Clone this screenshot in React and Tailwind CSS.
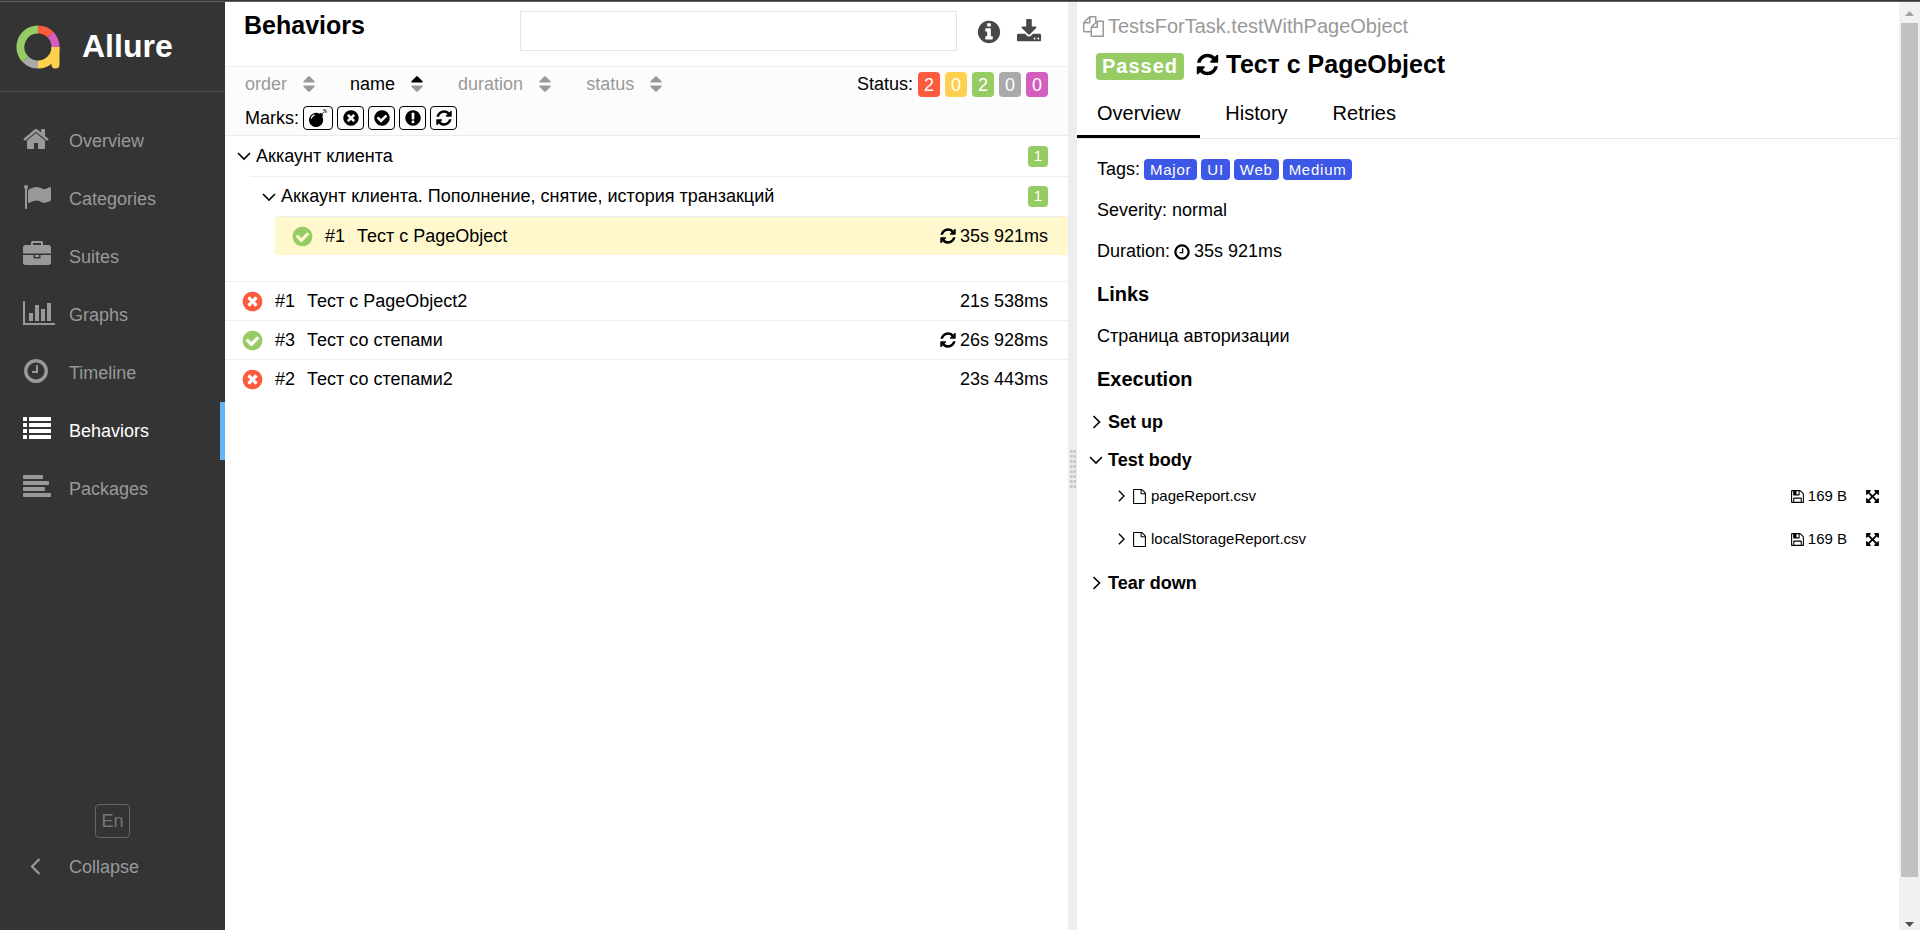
import React, { useState } from "react";

const RING =
  "q0 209-103 385.5t-279.5 279.5-385.5 103-385.5-103-279.5-279.5-103-385.5 103-385.5 279.5-279.5 385.5-103 385.5 103 279.5 279.5 103 385.5z";

const ICONS = {
  home: "M1472 992v480q0 26-19 45t-45 19h-384v-384h-256v384h-384q-26 0-45-19t-19-45v-480q0-1 .5-3t.5-3l575-474 575 474q1 2 1 6zm223-69l-62 74q-8 9-21 11h-3q-13 0-21-7l-692-577-692 577q-12 8-24 7-13-2-21-11l-62-74q-8-10-7-23.5t11-21.5l719-599q32-26 76-26t76 26l244 204v-195q0-14 9-23t23-9h192q14 0 23 9t9 23v408l219 182q10 8 11 21.5t-7 23.5z",
  flag: "M320 256q0 72-64 110v1266q0 13-9.5 22.5t-22.5 9.5h-64q-13 0-22.5-9.5t-9.5-22.5v-1266q-64-38-64-110 0-53 37.5-90.5t90.5-37.5 90.5 37.5 37.5 90.5zm1472 64v763q0 25-12.5 38.5t-39.5 27.5q-215 116-369 116-61 0-123.5-22t-108.5-48-115.5-48-142.5-22q-192 0-464 146-17 9-33 9-26 0-45-19t-19-45v-742q0-32 31-55 21-14 79-43 236-120 421-120 107 0 200 29t219 88q38 19 88 19 54 0 117.5-21t110-47 88-47 54.5-21q26 0 45 19t19 45z",
  briefcase:
    "M640 256h512v-128h-512v128zm1152 640v480q0 66-47 113t-113 47h-1472q-66 0-113-47t-47-113v-480h672v160q0 26 19 45t45 19h320q26 0 45-19t19-45v-160h672zm-768 0v128h-256v-128h256zm768-480v384h-1792v-384q0-66 47-113t113-47h352v-160q0-40 28-68t68-28h576q40 0 68 28t28 68v160h352q66 0 113 47t47 113z",
  chart:
    "M640 896v512h-256v-512h256zm384-512v1024h-256v-1024h256zm1024 1152v128h-2048v-1536h128v1408h1920zm-640-896v768h-256v-768h256zm384-384v1152h-256v-1152h256z",
  clock:
    "M1024 544v448q0 14-9 23t-23 9h-320q-14 0-23-9t-9-23v-64q0-14 9-23t23-9h224v-352q0-14 9-23t23-9h64q14 0 23 9t9 23zm416 352q0-148-73-273t-198-198-273-73-273 73-198 198-73 273 73 273 198 198 273 73 273-73 198-198 73-273zm224 0" +
    RING,
  list: "M0 160q0-32 32-32h192q32 0 32 32v192q0 32-32 32h-192q-32 0-32-32zM384 160q0-32 32-32h1344q32 0 32 32v192q0 32-32 32h-1344q-32 0-32-32zM0 544q0-32 32-32h192q32 0 32 32v192q0 32-32 32h-192q-32 0-32-32zM384 544q0-32 32-32h1344q32 0 32 32v192q0 32-32 32h-1344q-32 0-32-32zM0 928q0-32 32-32h192q32 0 32 32v192q0 32-32 32h-192q-32 0-32-32zM384 928q0-32 32-32h1344q32 0 32 32v192q0 32-32 32h-1344q-32 0-32-32zM0 1312q0-32 32-32h192q32 0 32 32v192q0 32-32 32h-192q-32 0-32-32zM384 1312q0-32 32-32h1344q32 0 32 32v192q0 32-32 32h-1344q-32 0-32-32z",
  align:
    "M1792 1344v128q0 26-19 45t-45 19h-1664q-26 0-45-19t-19-45v-128q0-26 19-45t45-19h1664q26 0 45 19t19 45zm-384-384v128q0 26-19 45t-45 19h-1280q-26 0-45-19t-19-45v-128q0-26 19-45t45-19h1280q26 0 45 19t19 45zm256-384v128q0 26-19 45t-45 19h-1536q-26 0-45-19t-19-45v-128q0-26 19-45t45-19h1536q26 0 45 19t19 45zm-384-384v128q0 26-19 45t-45 19h-1152q-26 0-45-19t-19-45v-128q0-26 19-45t45-19h1152q26 0 45 19t19 45z",
  info:
    "M1152 1376v-160q0-14-9-23t-23-9h-96v-512q0-14-9-23t-23-9h-320q-14 0-23 9t-9 23v160q0 14 9 23t23 9h96v320h-96q-14 0-23 9t-9 23v160q0 14 9 23t23 9h448q14 0 23-9t9-23zm-128-896v-160q0-14-9-23t-23-9h-192q-14 0-23 9t-9 23v160q0 14 9 23t23 9h192q14 0 23-9t9-23zm640 416" +
    RING,
  download:
    "M1344 1344q0-26-19-45t-45-19-45 19-19 45 19 45 45 19 45-19 19-45zm256 0q0-26-19-45t-45-19-45 19-19 45 19 45 45 19 45-19 19-45zm128-224v320q0 40-28 68t-68 28h-1472q-40 0-68-28t-28-68v-320q0-40 28-68t68-28h465l135 136q58 56 136 56t136-56l136-136h464q40 0 68 28t28 68zm-325-569q17 41-14 70l-448 448q-18 19-45 19t-45-19l-448-448q-31-29-14-70 17-39 59-39h256v-448q0-26 19-45t45-19h256q26 0 45 19t19 45v448h256q42 0 59 39z",
  bomb: "M571 589q-10-25-34-35t-49 0q-108 44-191 127t-127 191q-10 25 0 49t35 34q13 5 24 5 42 0 60-40 34-84 98.5-148.5t148.5-98.5q25-11 35-35t0-49zm942-356l46 46-244 243 68 68q19 19 19 45.5t-19 45.5l-64 64q89 161 89 343 0 143-55.5 273.5t-150 225-225 150-273.5 55.5-273.5-55.5-225-150-150-225-55.5-273.5 55.5-273.5 150-225 225-150 273.5-55.5q182 0 343 89l64-64q19-19 45.5-19t45.5 19l68 68zm8-56q-10 10-22 10-13 0-23-10l-91-90q-9-10-9-23t9-23q10-9 23-9t23 9l90 91q10 9 10 22.5t-10 22.5zm230 230q-11 9-23 9t-23-9l-90-91q-10-9-10-22.5t10-22.5q9-10 22.5-10t22.5 10l91 90q9 10 9 23t-9 23zm41-183q0 14-9 23t-23 9h-96q-14 0-23-9t-9-23 9-23 23-9h96q14 0 23 9t9 23zm-192-192v96q0 14-9 23t-23 9-23-9-9-23v-96q0-14 9-23t23-9 23 9 9 23zm151 55l-91 90q-10 10-22 10-13 0-23-10-10-9-10-22.5t10-22.5l90-91q10-9 23-9t23 9q9 10 9 23t-9 23z",
  failed:
    "M1277 1122q0-26-19-45l-181-181 181-181q19-19 19-45 0-27-19-46l-90-90q-19-19-46-19-26 0-45 19l-181 181-181-181q-19-19-45-19-27 0-46 19l-90 90q-19 19-19 46 0 26 19 45l181 181-181 181q-19 19-19 45 0 27 19 46l90 90q19 19 46 19 26 0 45-19l181-181 181 181q19 19 45 19 27 0 46-19l90-90q19-19 19-46zm387-226" +
    RING,
  passed:
    "M1412 734q0-28-18-46l-91-90q-19-19-45-19t-45 19l-408 407-226-226q-19-19-45-19t-45 19l-91 90q-18 18-18 46 0 27 18 45l362 362q19 19 45 19 27 0 46-19l543-543q18-18 18-45zm252 162" +
    RING,
  exclamation:
    "M896 128q209 0 385.5 103t279.5 279.5 103 385.5-103 385.5-279.5 279.5-385.5 103-385.5-103-279.5-279.5-103-385.5 103-385.5 279.5-279.5 385.5-103zm128 1247v-190q0-14-9-23.5t-22-9.5h-192q-13 0-23 10t-10 23v190q0 13 10 23t23 10h192q13 0 22-9.5t9-23.5zm-2-344l18-621q0-12-10-18-10-8-24-8h-220q-14 0-24 8-10 6-10 18l17 621q0 10 10 17.5t24 7.5h185q14 0 23.5-7.5t10.5-17.5z",
  refresh:
    "M1639 1056q0 5-1 7-64 268-268 434.5t-478 166.5q-146 0-282.5-55t-243.5-157l-129 129q-19 19-45 19t-45-19-19-45v-448q0-26 19-45t45-19h448q26 0 45 19t19 45-19 45l-137 137q71 66 161 102t187 36q134 0 250-65t186-179q11-17 53-117 8-23 30-23h192q13 0 22.5 9.5t9.5 22.5zm25-800v448q0 26-19 45t-45 19h-448q-26 0-45-19t-19-45 19-45l138-138q-148-137-349-137-134 0-250 65t-186 179q-11 17-53 117-8 23-30 23h-199q-13 0-22.5-9.5t-9.5-22.5v-7q65-268 270-434.5t480-166.5q146 0 284 55.5t245 156.5l130-129q19-19 45-19t45 19 19 45z",
  files:
    "M1696 384q40 0 68 28t28 68v1216q0 40-28 68t-68 28h-960q-40 0-68-28t-28-68v-288h-544q-40 0-68-28t-28-68v-672q0-40 20-88t48-76l408-408q28-28 76-48t88-20h416q40 0 68 28t28 68v328q68-40 128-40h416zm-544 213l-299 299h299v-299zm-640-384l-299 299h299v-299zm196 647l316-316v-416h-384v416q0 40-28 68t-68 28h-416v640h512v-256q0-40 20-88t48-76zm956 804v-1152h-384v416q0 40-28 68t-68 28h-416v640h896z",
  file: "M1596 380q28 28 48 76t20 88v1152q0 40-28 68t-68 28h-1344q-40 0-68-28t-28-68v-1600q0-40 28-68t68-28h896q40 0 88 20t76 48zm-444-244v376h376q-10-29-22-41l-313-313q-12-12-41-22zm384 1528v-1024h-416q-40 0-68-28t-28-68v-416h-768v1536h1280z",
  floppy:
    "M512 1536h768v-384h-768v384zm896 0h128v-896q0-14-10-38.5t-20-34.5l-281-281q-10-10-34-20t-39-10v416q0 40-28 68t-68 28h-576q-40 0-68-28t-28-68v-416h-128v1280h128v-416q0-40 28-68t68-28h832q40 0 68 28t28 68v416zm-384-928v-320q0-13-9.5-22.5t-22.5-9.5h-192q-13 0-22.5 9.5t-9.5 22.5v320q0 13 9.5 22.5t22.5 9.5h192q13 0 22.5-9.5t9.5-22.5zm640 32v928q0 40-28 68t-68 28h-1344q-40 0-68-28t-28-68v-1344q0-40 28-68t68-28h928q40 0 88 20t76 48l280 280q28 28 48 76t20 88z",
  expand:
    "M1411 541l-355 355 355 355 144-144q29-31 70-14 39 17 39 59v448q0 26-19 45t-45 19h-448q-42 0-59-40-17-39 14-69l144-144-355-355-355 355 144 144q31 30 14 69-17 40-59 40h-448q-26 0-45-19t-19-45v-448q0-42 40-59 39-17 69 14l144 144 355-355-355-355-144 144q-19 19-45 19-12 0-24-5-40-17-40-59v-448q0-26 19-45t45-19h448q42 0 59 40 17 39-14 69l-144 144 355 355 355-355-144-144q-31-30-14-69 17-40 59-40h448q26 0 45 19t19 45v448q0 42-39 59-13 5-25 5-26 0-45-19z",
};

function Icon({ name, className, viewBox = "0 0 1792 1792" }) {
  return (
    <svg viewBox={viewBox} className={`shrink-0 ${className}`} fill="currentColor" aria-hidden="true">
      <path d={ICONS[name]} />
    </svg>
  );
}

function ChevronDown() {
  return (
    <svg viewBox="0 0 14 14" className="size-3.5 shrink-0" fill="none" stroke="currentColor" strokeWidth="1.6" aria-hidden="true">
      <path d="M1 4l6 6 6-6" />
    </svg>
  );
}

function ChevronRight({ className }) {
  return (
    <svg viewBox="0 0 14 14" className={`shrink-0 ${className}`} fill="none" stroke="currentColor" strokeWidth="1.6" aria-hidden="true">
      <path d="M4.500 1l6 6-6 6" />
    </svg>
  );
}

function Logo() {
  return (
    <svg viewBox="0 0 44 44" className="size-11 shrink-0" fill="none" strokeWidth="8" aria-hidden="true">
      <path d="M9.600 34.400A17.500 17.500 0 0 1 22 4.500" stroke="#97cc64" />
      <path d="M22 39.500A17.500 17.500 0 0 1 9.600 34.400" stroke="#aaaaaa" />
      <path d="M22 4.500A17.500 17.500 0 0 1 34.400 9.600" stroke="#fd5a3e" />
      <path d="M34.400 9.600A17.500 17.500 0 0 1 39.500 22" stroke="#d35ebe" />
      <path d="M39.500 22A17.500 17.500 0 0 1 22 39.500" stroke="#ffd050" />
      <path d="M35.500 22h8v17.500a4 4 0 0 1-8 0z" fill="#ffd050" />
    </svg>
  );
}

const NAV = [
  { label: "Overview", icon: "home", viewBox: "64 0 1792 1792" },
  { label: "Categories", icon: "flag" },
  { label: "Suites", icon: "briefcase" },
  { label: "Graphs", icon: "chart", viewBox: "0 0 2048 1792" },
  { label: "Timeline", icon: "clock", viewBox: "64 0 1792 1792" },
  { label: "Behaviors", icon: "list" },
  { label: "Packages", icon: "align" },
];

function Sidebar() {
  return (
    <aside className="flex w-[225px] shrink-0 flex-col bg-[#343434] text-[#999]">
      <a href="#home" className="flex h-[90px] items-center gap-[22px] border-b border-[#505050] pl-4 text-[32px] font-bold text-white">
        <Logo />
        <span className="pb-0.5 leading-none">Allure</span>
      </a>
      <nav className="mt-5">
        {NAV.map((item) => {
          const active = item.label === "Behaviors";
          return (
            <a
              key={item.label}
              href={`#${item.label.toLowerCase()}`}
              className={`flex h-[58px] items-center border-r-[5px] pl-[23px] ${
                active ? "border-[#64b5f6] text-white" : "border-transparent"
              }`}
            >
              <span className="w-[46px] shrink-0 pb-1">
                <Icon name={item.icon} viewBox={item.viewBox} className={item.icon === "chart" ? "h-7 w-8" : "size-7"} />
              </span>
              {item.label}
            </a>
          );
        })}
      </nav>
      <div className="mt-auto flex flex-col pb-[34px]">
        <button type="button" className="h-[34px] w-[35px] self-center rounded border border-[#666] text-[#777]">
          En
        </button>
        <button type="button" className="flex h-[58px] items-center pl-[23px] text-left">
          <span className="w-[46px] shrink-0">
            <svg viewBox="0 0 24 24" className="size-6" fill="none" stroke="currentColor" strokeWidth="2.200" aria-hidden="true">
              <path d="M16.500 4l-7.500 7.500 7.500 7.500" />
            </svg>
          </span>
          Collapse
        </button>
      </div>
    </aside>
  );
}

function SortButton({ label, active, onClick }) {
  return (
    <button type="button" onClick={onClick} className={`flex items-center gap-3 ${active ? "text-black" : "text-[#999]"}`}>
      {label}
      <svg viewBox="0 0 1792 1792" className="size-5 shrink-0" aria-hidden="true">
        <path
          fill={active ? "#000" : "#999"}
          d="M1408 704q0 26-19 45t-45 19h-896q-26 0-45-19t-19-45 19-45l448-448q19-19 45-19t45 19l448 448q19 19 19 45z"
        />
        <path
          fill="#999"
          d="M1408 1088q0 26-19 45l-448 448q-19 19-45 19t-45-19l-448-448q-19-19-19-45t19-45 45-19h896q26 0 45 19t19 45z"
        />
      </svg>
    </button>
  );
}

const STATUSES = [
  { name: "failed", count: 2, color: "bg-[#fd5a3e]" },
  { name: "broken", count: 0, color: "bg-[#ffd050]" },
  { name: "passed", count: 2, color: "bg-[#97cc64]" },
  { name: "skipped", count: 0, color: "bg-[#aaa]" },
  { name: "unknown", count: 0, color: "bg-[#d35ebe]" },
];

function CountChip({ children }) {
  return (
    <span className="ml-auto flex h-[21px] w-5 items-center justify-center rounded bg-[#97cc64] text-[15px] text-white">
      {children}
    </span>
  );
}

function StatusIcon({ status }) {
  return (
    <Icon
      name={status}
      className={`size-[23px] ${status === "passed" ? "text-[#97cc64]" : "text-[#fd5a3e]"}`}
    />
  );
}

function Leaf({ status, order, name, time, retried, className = "" }) {
  return (
    <a href={`#test-${order}`} className={`flex h-[39px] items-center border-t border-[#eceff1] pr-5 ${className}`}>
      <StatusIcon status={status} />
      <span className="ml-[11px] w-8">#{order}</span>
      <span>{name}</span>
      <span className="ml-auto flex items-center gap-[3px]">
        {retried && <Icon name="refresh" className="size-[18px]" />}
        {time}
      </span>
    </a>
  );
}

function BehaviorsPane() {
  const [sort, setSort] = useState("name");
  return (
    <section className="flex min-w-0 flex-1 flex-col">
      <header className="flex h-16 items-start pr-[26px] pl-[19px]">
        <h1 className="mt-1 flex-1 text-[25px] leading-[38px] font-bold">Behaviors</h1>
        <input type="text" aria-label="Search" className="mt-[9px] h-10 w-[437px] border border-[#e5e5e5] bg-white px-3 outline-none" />
        <div className="mt-[17px] ml-[19px] flex gap-3.5 text-[#484848]">
          <button type="button" aria-label="Information">
            <Icon name="info" className="size-[26px]" />
          </button>
          <button type="button" aria-label="Download">
            <Icon name="download" className="size-[26px]" />
          </button>
        </div>
      </header>
      <div className="h-[69px] border-t border-[#ececec] bg-[#fcfcfc] pr-5 pl-5">
        <div className="flex h-[34px] items-center">
          <div className="flex gap-[31px]">
            {["order", "name", "duration", "status"].map((label) => (
              <SortButton key={label} label={label} active={sort === label} onClick={() => setSort(label)} />
            ))}
          </div>
          <div className="ml-auto flex items-center gap-[5px]">
            Status:
            {STATUSES.map((s) => (
              <button
                key={s.name}
                type="button"
                aria-label={`${s.name}: ${s.count}`}
                className={`h-[25px] w-[22px] rounded text-white ${s.color}`}
              >
                {s.count}
              </button>
            ))}
          </div>
        </div>
        <div className="flex h-[34px] items-center gap-1">
          Marks:
          {["bomb", "failed", "passed", "exclamation", "refresh"].map((mark) => (
            <button
              key={mark}
              type="button"
              aria-label={mark}
              className={`flex h-6 items-center justify-center rounded border border-black ${mark === "bomb" ? "w-[30px]" : "w-[27px]"}`}
            >
              <Icon name={mark} className="size-[18px]" />
            </button>
          ))}
        </div>
      </div>
      <div className="border-t border-[#ececec]">
        <button type="button" className="flex h-10 w-full items-center gap-[5px] pr-5 pl-3">
          <ChevronDown />
          Аккаунт клиента
          <CountChip>1</CountChip>
        </button>
        <div className="pl-[25px]">
          <button type="button" className="flex h-10 w-full items-center gap-[5px] border-t border-[#eceff1] pr-5 pl-3">
            <ChevronDown />
            Аккаунт клиента. Пополнение, снятие, история транзакций
            <CountChip>1</CountChip>
          </button>
          <div className="pl-[25px]">
            <Leaf status="passed" order={1} name="Тест с PageObject" time="35s 921ms" retried className="bg-[#fff8cd] pl-4" />
          </div>
        </div>
        <div className="mt-[26px]">
          <Leaf status="failed" order={1} name="Тест с PageObject2" time="21s 538ms" className="pl-4" />
          <Leaf status="passed" order={3} name="Тест со степами" time="26s 928ms" retried className="pl-4" />
          <Leaf status="failed" order={2} name="Тест со степами2" time="23s 443ms" className="pl-4" />
        </div>
      </div>
    </section>
  );
}

function Splitter() {
  return (
    <div className="flex w-[9px] shrink-0 items-center justify-center bg-[#eaeef1] pt-1.5">
      <svg viewBox="0 0 6 38" className="h-[38px] w-1.5" fill="#c8c8c8" aria-hidden="true">
        {[0, 5, 10, 15, 20, 25, 30, 35].map((y) => (
          <path key={y} d={`M0 ${y}h2.600v3h-2.600zM3.400 ${y}h2.600v3h-2.600z`} />
        ))}
      </svg>
    </div>
  );
}

function Attachment({ name }) {
  return (
    <div className="flex h-[34px] items-center pr-[19px] pl-[38px] text-[15px]">
      <button type="button" className="flex items-center">
        <ChevronRight className="mr-[5px] size-3" />
        <Icon name="file" className="mr-1 size-[15px]" />
        {name}
      </button>
      <a href={`#${name}`} className="ml-auto flex items-center gap-[3px]">
        <Icon name="floppy" className="size-[15px]" />
        169 B
      </a>
      <button type="button" aria-label={`Expand ${name}`} className="ml-[18px]">
        <Icon name="expand" className="size-[15px]" />
      </button>
    </div>
  );
}

function StepHeader({ title, open }) {
  return (
    <button type="button" className="flex h-[38px] items-center gap-[5px] pl-3 font-bold">
      {open ? <ChevronDown /> : <ChevronRight className="size-3.5" />}
      {title}
    </button>
  );
}

function TestPane() {
  const [tab, setTab] = useState("Overview");
  return (
    <section className="flex min-w-0 flex-1">
      <div className="min-w-0 flex-1 pt-[9px]">
        <div className="flex h-[30px] items-center gap-1 pl-1.5 text-[20px] text-[#999]">
          <Icon name="files" className="size-[21px]" />
          TestsForTask.testWithPageObject
        </div>
        <div className="flex h-[49px] items-center pt-0.5 pl-[19px]">
          <span className="rounded bg-[#97cc64] px-1.5 text-[20px] leading-[27px] font-bold tracking-wider text-white">Passed</span>
          <h2 className="ml-[11px] flex items-center gap-1.5 pb-1 text-[25px] leading-none font-bold">
            <Icon name="refresh" className="size-[25px]" />
            Тест с PageObject
          </h2>
        </div>
        <div className="flex gap-[5px] border-b border-[#e5e5e5] text-[20px]">
          {["Overview", "History", "Retries"].map((t) => (
            <button
              key={t}
              type="button"
              onClick={() => setTab(t)}
              className={`h-12 border-b-[3px] px-5 ${tab === t ? "border-black" : "border-transparent"}`}
            >
              {t}
            </button>
          ))}
        </div>
        <div className="pt-2.5 pl-5">
          <div className="flex h-[41px] items-center gap-1">
            Tags:
            {["Major", "UI", "Web", "Medium"].map((tag) => (
              <span key={tag} className="rounded bg-[#3d57e6] px-1.5 text-[15px] leading-[21px] tracking-wider text-white">
                {tag}
              </span>
            ))}
          </div>
          <div className="flex h-[41px] items-center">Severity: normal</div>
          <div className="flex h-[41px] items-center gap-[3px]">
            Duration:
            <Icon name="clock" className="size-[18px]" />
            35s 921ms
          </div>
          <h3 className="text-[20px] leading-[44px] font-bold">Links</h3>
          <a href="#login" className="flex h-[41px] items-center">
            Страница авторизации
          </a>
          <h3 className="text-[20px] leading-[44px] font-bold">Execution</h3>
        </div>
        <div className="pt-0.5">
          <StepHeader title="Set up" />
          <StepHeader title="Test body" open />
          <div className="flex flex-col gap-[9px] pb-2">
            <Attachment name="pageReport.csv" />
            <Attachment name="localStorageReport.csv" />
          </div>
          <StepHeader title="Tear down" />
        </div>
      </div>
      <div className="flex w-[21px] shrink-0 flex-col items-center bg-[#f1f1f1]" aria-hidden="true">
        <svg viewBox="0 0 21 21" className="size-[21px]" fill="#a3a3a3">
          <path d="M6 14h9l-4.500-5z" />
        </svg>
        <div className="w-[17px] grow-[27] bg-[#c1c1c1]" />
        <div className="grow" />
        <svg viewBox="0 0 21 21" className="size-[21px]" fill="#505050">
          <path d="M6 13h9l-4.500 5z" />
        </svg>
      </div>
    </section>
  );
}

export default function App() {
  return (
    <div className="flex min-h-screen flex-col border-t border-[#373435] bg-white font-['Liberation_Sans',Arial,sans-serif] text-[18px] leading-normal text-black">
      <div className="h-px bg-[#666164]" />
      <div className="flex grow">
        <Sidebar />
        <BehaviorsPane />
        <Splitter />
        <TestPane />
      </div>
    </div>
  );
}
